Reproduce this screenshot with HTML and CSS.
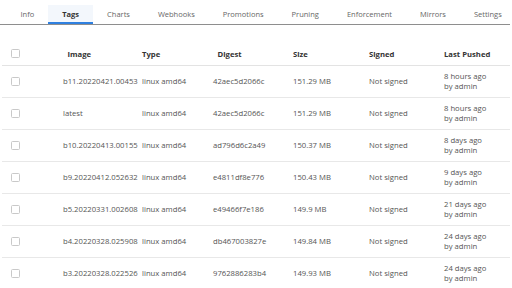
FILE: index.html
```html
<!DOCTYPE html>
<html>
<head>
<meta charset="utf-8">
<link rel="stylesheet" href="styles.css">
</head>
<body>
<div class="page">
  <nav class="tabs">
    <span class="tab">Info</span>
    <span class="tab active">Tags</span>
    <span class="tab">Charts</span>
    <span class="tab">Webhooks</span>
    <span class="tab">Promotions</span>
    <span class="tab">Pruning</span>
    <span class="tab">Enforcement</span>
    <span class="tab">Mirrors</span>
    <span class="tab">Settings</span>
  </nav>
  <table class="tags">
    <colgroup>
      <col class="c-check"><col class="c-image"><col class="c-type"><col class="c-digest"><col class="c-size"><col class="c-signed"><col class="c-pushed">
    </colgroup>
    <thead>
      <tr>
        <th class="check"><span class="box"></span></th>
        <th class="shift">Image</th>
        <th>Type</th>
        <th class="shift">Digest</th>
        <th>Size</th>
        <th>Signed</th>
        <th>Last Pushed</th>
      </tr>
    </thead>
    <tbody>
      <tr><td class="check"><span class="box"></span></td><td>b11.20220421.00453</td><td>linux amd64</td><td>42aec5d2066c</td><td>151.29 MB</td><td>Not signed</td><td>8 hours ago<br>by admin</td></tr>
      <tr><td class="check"><span class="box"></span></td><td>latest</td><td>linux amd64</td><td>42aec5d2066c</td><td>151.29 MB</td><td>Not signed</td><td>8 hours ago<br>by admin</td></tr>
      <tr><td class="check"><span class="box"></span></td><td>b10.20220413.00155</td><td>linux amd64</td><td>ad796d6c2a49</td><td>150.37 MB</td><td>Not signed</td><td>8 days ago<br>by admin</td></tr>
      <tr><td class="check"><span class="box"></span></td><td>b9.20220412.052632</td><td>linux amd64</td><td>e4811df8e776</td><td>150.43 MB</td><td>Not signed</td><td>9 days ago<br>by admin</td></tr>
      <tr><td class="check"><span class="box"></span></td><td>b5.20220331.002608</td><td>linux amd64</td><td>e49466f7e186</td><td>149.9 MB</td><td>Not signed</td><td>21 days ago<br>by admin</td></tr>
      <tr><td class="check"><span class="box"></span></td><td>b4.20220328.025908</td><td>linux amd64</td><td>db467003827e</td><td>149.84 MB</td><td>Not signed</td><td>24 days ago<br>by admin</td></tr>
      <tr><td class="check"><span class="box"></span></td><td>b3.20220328.022526</td><td>linux amd64</td><td>9762886283b4</td><td>149.93 MB</td><td>Not signed</td><td>24 days ago<br>by admin</td></tr>
    </tbody>
  </table>
</div>
</body>
</html>
```
FILE: styles.css
```css
html, body {
  margin: 0;
  padding: 0;
  background: #ffffff;
}
body {
  font-family: "Open Sans", "Noto Sans", sans-serif;
  font-size: 7.7px;
  color: #555;
  width: 512px;
  height: 288px;
  overflow: hidden;
}
.page {
  width: 510px;
}
.tabs {
  display: flex;
  padding: 5px 0 0 6.5px;
  border-bottom: 1px solid #8e8e8e;
  font-size: 7.5px;
}
.tab {
  padding: 0 14px;
  height: 19px;
  line-height: 19px;
  color: #666;
  white-space: nowrap;
}
.tab.active {
  background: #f3f7fc;
  color: #333;
  font-weight: 700;
  box-shadow: inset 0 -2px 0 #2f80e0;
}
.tags {
  margin: 17px 0 0 2px;
  width: 508px;
  border-collapse: collapse;
  table-layout: fixed;
}
.c-check { width: 61px; }
.c-image { width: 79px; }
.c-type { width: 71px; }
.c-digest { width: 80px; }
.c-size { width: 76px; }
.c-signed { width: 75px; }
.c-pushed { width: 66px; }
th, td {
  padding: 0;
  text-align: left;
  vertical-align: middle;
  white-space: nowrap;
}
th {
  height: 23px;
  color: #333;
  font-weight: 700;
  border-bottom: 1px solid #e3e3e3;
}
th.shift {
  padding-left: 4.5px;
}
td {
  height: 31px;
  line-height: 9.5px;
  border-bottom: 1px solid #e8e8e8;
}
.check {
  padding-left: 9px;
}
.box {
  display: block;
  width: 7px;
  height: 7px;
  border: 1px solid #c9c9c9;
  border-radius: 1.5px;
  background: #fff;
}
```
